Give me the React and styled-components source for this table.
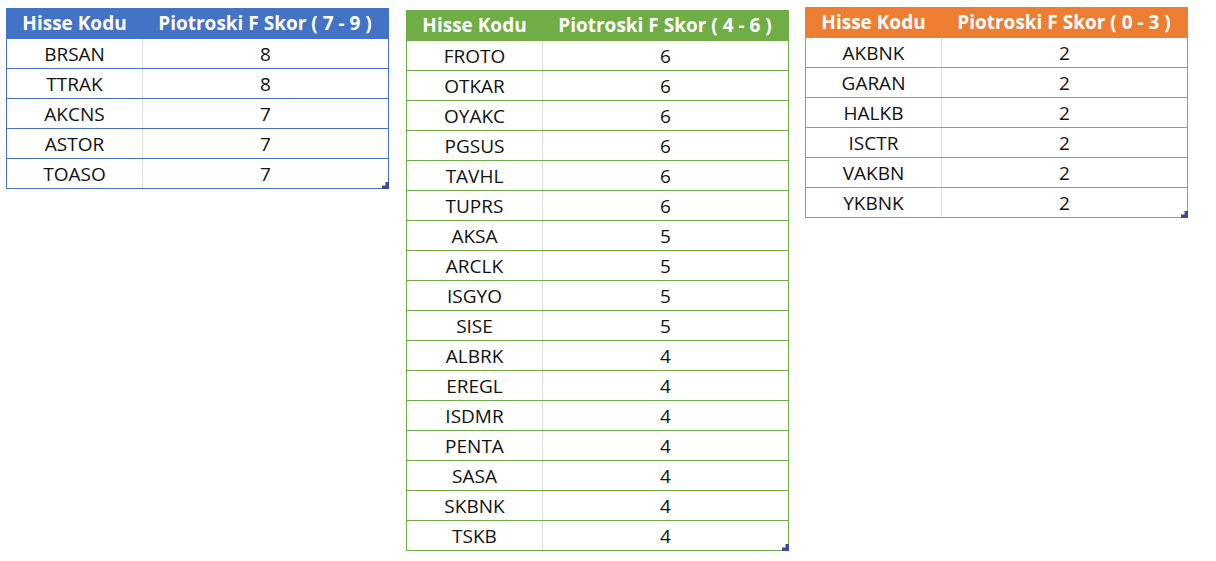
import React from "react";
import styled, { createGlobalStyle } from "styled-components";

const GlobalStyle = createGlobalStyle`
  html, body {
    margin: 0;
    padding: 0;
    background: #ffffff;
  }
  body {
    font-family: "Open Sans", "Liberation Sans", sans-serif;
    color: #111;
  }
`;

const Page = styled.div`
  display: flex;
  align-items: flex-start;
  padding-left: 6px;
  width: 1216px;
  height: 561px;
  box-sizing: border-box;
`;

const Table = styled.div`
  position: relative;
  width: 383px;
  margin-top: ${(p) => p.$top}px;
  margin-right: ${(p) => p.$gap}px;
  border: 1px solid ${(p) => p.$color};
  border-top: none;
  box-sizing: border-box;
`;

const HeaderRow = styled.div`
  display: grid;
  grid-template-columns: 135px 1fr;
  height: 30px;
  background: ${(p) => p.$color};
  color: #fff;
  font-weight: 700;
  font-size: 19px;
`;

const Row = styled.div`
  display: grid;
  grid-template-columns: 135px 1fr;
  height: 30px;
  border-top: 1px solid ${(p) => p.$color};
  box-sizing: border-box;
  font-size: 19px;
`;

const Cell = styled.div`
  display: flex;
  align-items: center;
  justify-content: center;
  border-left: ${(p) => (p.$divider ? "1px solid #d9d9d9" : "none")};
`;

const Handle = styled.div`
  position: absolute;
  right: -1px;
  bottom: -1px;
  width: 7px;
  height: 7px;
  background: #3b4a9e;
  clip-path: polygon(100% 0, 100% 100%, 0 100%, 0 50%, 50% 50%, 50% 0);
`;

const tables = [
  {
    color: "#4472c4",
    range: "7 - 9",
    top: 8,
    gap: 17,
    rows: [
      ["BRSAN", 8],
      ["TTRAK", 8],
      ["AKCNS", 7],
      ["ASTOR", 7],
      ["TOASO", 7],
    ],
  },
  {
    color: "#70ad47",
    range: "4 - 6",
    top: 10,
    gap: 16,
    rows: [
      ["FROTO", 6],
      ["OTKAR", 6],
      ["OYAKC", 6],
      ["PGSUS", 6],
      ["TAVHL", 6],
      ["TUPRS", 6],
      ["AKSA", 5],
      ["ARCLK", 5],
      ["ISGYO", 5],
      ["SISE", 5],
      ["ALBRK", 4],
      ["EREGL", 4],
      ["ISDMR", 4],
      ["PENTA", 4],
      ["SASA", 4],
      ["SKBNK", 4],
      ["TSKB", 4],
    ],
  },
  {
    color: "#ed7d31",
    range: "0 - 3",
    top: 7,
    gap: 0,
    rows: [
      ["AKBNK", 2],
      ["GARAN", 2],
      ["HALKB", 2],
      ["ISCTR", 2],
      ["VAKBN", 2],
      ["YKBNK", 2],
    ],
  },
];

const ScoreTable = ({ table }) => (
  <Table $color={table.color} $top={table.top} $gap={table.gap}>
    <HeaderRow $color={table.color}>
      <Cell>Hisse Kodu</Cell>
      <Cell>Piotroski F Skor ( {table.range} )</Cell>
    </HeaderRow>
    {table.rows.map(([code, score]) => (
      <Row key={code} $color={table.color}>
        <Cell>{code}</Cell>
        <Cell $divider>{score}</Cell>
      </Row>
    ))}
    <Handle />
  </Table>
);

export default function App() {
  return (
    <>
      <GlobalStyle />
      <Page>
        {tables.map((t) => (
          <ScoreTable key={t.range} table={t} />
        ))}
      </Page>
    </>
  );
}
